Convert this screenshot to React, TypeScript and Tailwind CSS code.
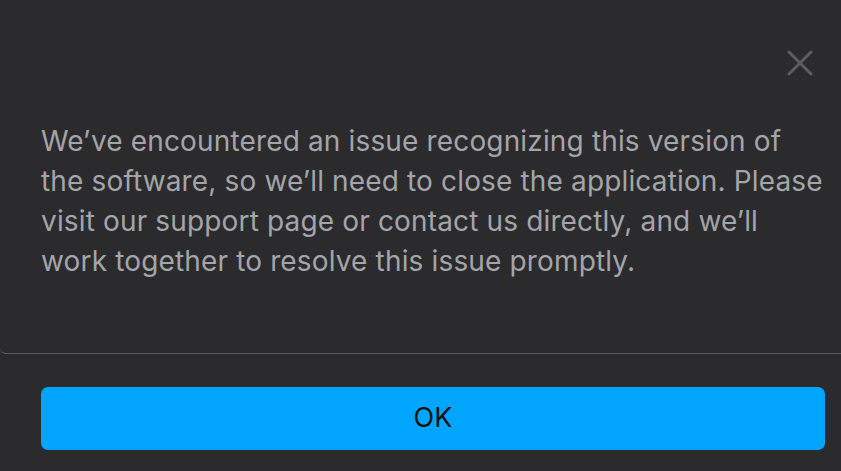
import React from "react";

export default function App() {
  return (
    <div className="w-[841px] h-[471px] bg-[#2b2b2d] flex flex-col overflow-hidden" style={{ fontFamily: "Inter, 'Noto Sans', sans-serif" }}>
      <div className="h-[354px] border-b border-[#5a5a5c] rounded-bl-[6px] flex flex-col">
        <div className="flex justify-end pt-[50px] pr-[28px]">
          <svg width="26" height="26" viewBox="0 0 26 26" fill="none" stroke="#5e5e62" strokeWidth="3" strokeLinecap="round">
            <path d="M2 2 L24 24 M24 2 L2 24" />
          </svg>
        </div>
        <p className="mt-[45px] pl-[41px] pr-[17px] text-[28px] tracking-[0.15px] leading-[40px] text-[#a3a5aa]">
          We’ve encountered an issue recognizing this version of the software, so we’ll need to close the application. Please visit our support page or contact us directly, and we’ll work together to resolve this issue promptly.
        </p>
      </div>
      <div className="px-[41px] pr-[16px] pt-[33px]">
        <button className="w-full h-[63px] rounded-[7px] bg-[#00a5ff] text-[#111111] text-[27px] flex items-center justify-center">
          OK
        </button>
      </div>
    </div>
  );
}
